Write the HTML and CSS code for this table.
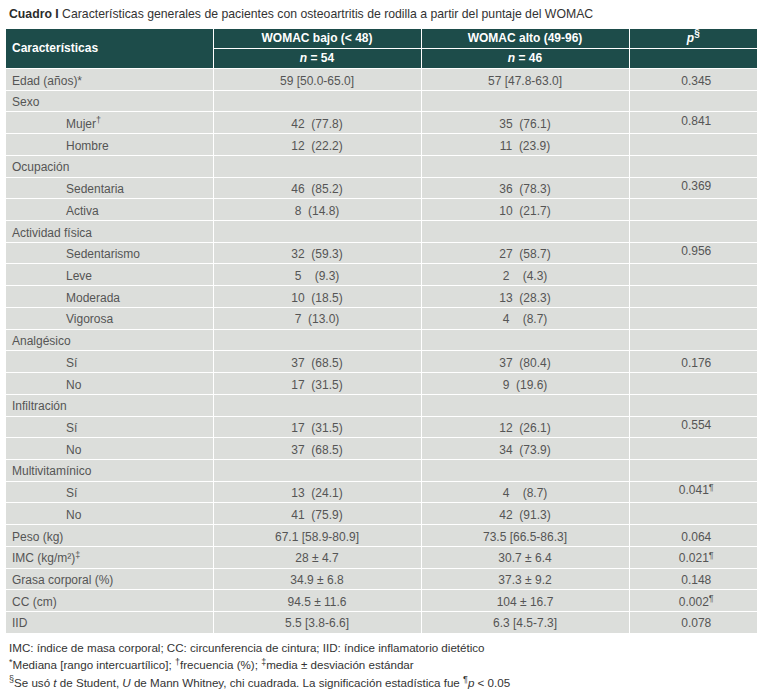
FILE: index.html
```html
<!DOCTYPE html>
<html lang="es">
<head>
<meta charset="utf-8">
<title>Cuadro I</title>
<link rel="stylesheet" href="styles.css">
</head>
<body>
<div class="wrap">
  <div class="title"><b>Cuadro I</b> Características generales de pacientes con osteoartritis de rodilla a partir del puntaje del WOMAC</div>
  <table class="tbl">
    <colgroup>
      <col class="c1"><col class="c2"><col class="c3"><col class="c4">
    </colgroup>
    <thead>
      <tr class="h1">
        <th rowspan="2" class="left">Características</th>
        <th>WOMAC bajo (&lt; 48)</th>
        <th>WOMAC alto (49-96)</th>
        <th><i>p</i><sup>§</sup></th>
      </tr>
      <tr class="h2">
        <th><i>n</i> = 54</th>
        <th><i>n</i> = 46</th>
        <th></th>
      </tr>
    </thead>
    <tbody>
      <tr><td>Edad (años)*</td><td class="v">59 [50.0-65.0]</td><td class="v">57 [47.8-63.0]</td><td class="p">0.345</td></tr>
      <tr><td>Sexo</td><td></td><td></td><td></td></tr>
      <tr><td class="sub">Mujer<sup>†</sup></td><td class="v">42  (77.8)</td><td class="v">35  (76.1)</td><td class="p top">0.841</td></tr>
      <tr><td class="sub">Hombre</td><td class="v">12  (22.2)</td><td class="v">11  (23.9)</td><td></td></tr>
      <tr><td>Ocupación</td><td></td><td></td><td></td></tr>
      <tr><td class="sub">Sedentaria</td><td class="v">46  (85.2)</td><td class="v">36  (78.3)</td><td class="p top">0.369</td></tr>
      <tr><td class="sub">Activa</td><td class="v">8  (14.8)</td><td class="v">10  (21.7)</td><td></td></tr>
      <tr><td>Actividad física</td><td></td><td></td><td></td></tr>
      <tr><td class="sub">Sedentarismo</td><td class="v">32  (59.3)</td><td class="v">27  (58.7)</td><td class="p top">0.956</td></tr>
      <tr><td class="sub">Leve</td><td class="v">5    (9.3)</td><td class="v">2    (4.3)</td><td></td></tr>
      <tr><td class="sub">Moderada</td><td class="v">10  (18.5)</td><td class="v">13  (28.3)</td><td></td></tr>
      <tr><td class="sub">Vigorosa</td><td class="v">7  (13.0)</td><td class="v">4    (8.7)</td><td></td></tr>
      <tr><td>Analgésico</td><td></td><td></td><td></td></tr>
      <tr><td class="sub">Sí</td><td class="v">37  (68.5)</td><td class="v">37  (80.4)</td><td class="p">0.176</td></tr>
      <tr><td class="sub">No</td><td class="v">17  (31.5)</td><td class="v">9  (19.6)</td><td></td></tr>
      <tr><td>Infiltración</td><td></td><td></td><td></td></tr>
      <tr><td class="sub">Sí</td><td class="v">17  (31.5)</td><td class="v">12  (26.1)</td><td class="p top">0.554</td></tr>
      <tr><td class="sub">No</td><td class="v">37  (68.5)</td><td class="v">34  (73.9)</td><td></td></tr>
      <tr><td>Multivitamínico</td><td></td><td></td><td></td></tr>
      <tr><td class="sub">Sí</td><td class="v">13  (24.1)</td><td class="v">4    (8.7)</td><td class="p top">0.041<sup>¶</sup></td></tr>
      <tr><td class="sub">No</td><td class="v">41  (75.9)</td><td class="v">42  (91.3)</td><td></td></tr>
      <tr><td>Peso (kg)</td><td class="v">67.1 [58.9-80.9]</td><td class="v">73.5 [66.5-86.3]</td><td class="p">0.064</td></tr>
      <tr><td>IMC (kg/m²)<sup>‡</sup></td><td class="v">28 ± 4.7</td><td class="v">30.7 ± 6.4</td><td class="p">0.021<sup>¶</sup></td></tr>
      <tr><td>Grasa corporal (%)</td><td class="v">34.9 ± 6.8</td><td class="v">37.3 ± 9.2</td><td class="p">0.148</td></tr>
      <tr><td>CC (cm)</td><td class="v">94.5 ± 11.6</td><td class="v">104 ± 16.7</td><td class="p">0.002<sup>¶</sup></td></tr>
      <tr><td>IID</td><td class="v">5.5 [3.8-6.6]</td><td class="v">6.3 [4.5-7.3]</td><td class="p">0.078</td></tr>
    </tbody>
  </table>
  <div class="notes">
    <p>IMC: índice de masa corporal; CC: circunferencia de cintura; IID: índice inflamatorio dietético</p>
    <p><sup>*</sup>Mediana [rango intercuartílico]; <sup>†</sup>frecuencia (%); <sup>‡</sup>media ± desviación estándar</p>
    <p><sup>§</sup>Se usó <i>t</i> de Student, <i>U</i> de Mann Whitney, chi cuadrada. La significación estadística fue <sup>¶</sup><i>p</i> &lt; 0.05</p>
  </div>
</div>
</body>
</html>
```

FILE: styles.css
```css
html, body {
  margin: 0;
  padding: 0;
  background: #ffffff;
}
body {
  font-family: "Liberation Sans", Arial, sans-serif;
  font-size: 12px;
  color: #333333;
}
.wrap {
  padding: 7px 0 0 6px;
  width: 751px;
}
.title {
  padding-left: 3px;
  height: 22px;
  line-height: 14px;
  font-size: 12.25px;
  color: #333333;
}
.title b {
  font-weight: bold;
  color: #2b2b2b;
}
.tbl {
  width: 751px;
  border-collapse: collapse;
  table-layout: fixed;
}
.c1 { width: 207px; }
.c2 { width: 208px; }
.c3 { width: 208px; }
.c4 { width: 128px; }
.tbl th {
  background: #1d4c4a;
  color: #ffffff;
  font-weight: bold;
  font-size: 12px;
  line-height: 19px;
  padding: 0;
  text-align: center;
  border: 1px solid #ffffff;
  border-top: none;
}
.tbl th.left {
  text-align: left;
  padding-left: 6px;
  border-left: none;
}
.tbl th:last-child { border-right: none; }
.tbl th i { font-style: italic; }
sup {
  font-size: 9px;
  line-height: 0;
  vertical-align: baseline;
  position: relative;
  top: -0.5em;
}
.tbl th sup {
  font-size: 10px;
}
.tbl td {
  background: #dcdedb;
  color: #555555;
  line-height: 18.22px;
  padding: 2.5px 0 0 6px;
  border: 1px solid #ffffff;
  vertical-align: top;
  white-space: pre;
}
.tbl td:first-child { border-left: none; }
.tbl td:last-child { border-right: none; }
.tbl td.sub { padding-left: 60px; }
.tbl td.v {
  text-align: center;
  padding-left: 0;
}
.tbl td.p {
  text-align: center;
  padding-left: 6px;
}
.tbl td.top {
  line-height: 16px;
  padding-top: 0.5px;
}
.notes {
  padding: 5px 0 0 3px;
  color: #333333;
  font-size: 11.6px;
}
.notes p {
  margin: 0;
  line-height: 17.5px;
}
```
